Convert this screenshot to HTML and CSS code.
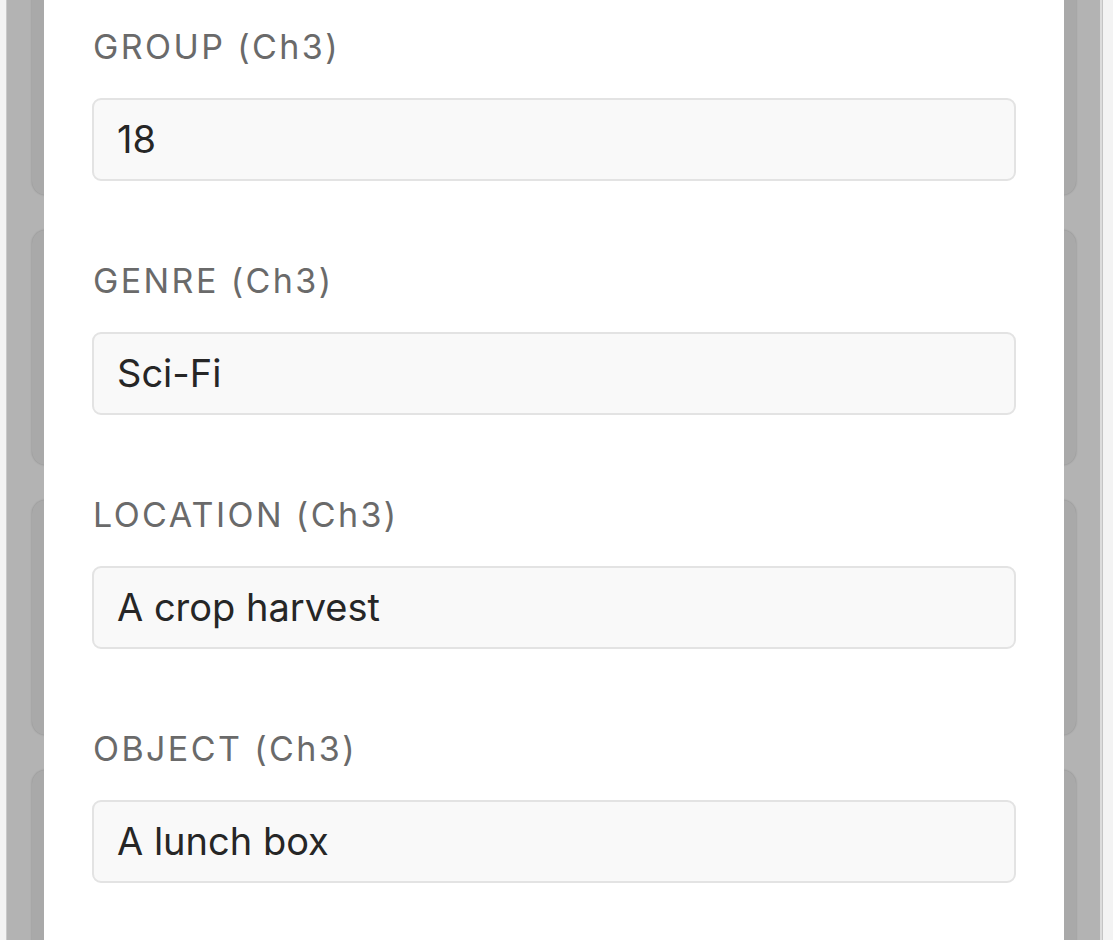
FILE: index.html
```html
<!DOCTYPE html>
<html lang="en">
<head>
<meta charset="utf-8">
<title>Fields</title>
<link rel="stylesheet" href="styles.css">
</head>
<body>
  <div class="edge-left"></div>
  <div class="edge-left-line"></div>
  <div class="backdrop">
    <div class="cards">
      <div class="card"></div>
      <div class="card"></div>
      <div class="card"></div>
      <div class="card"></div>
    </div>
    <div class="sheet">
      <div class="field">
        <div class="label">GROUP (Ch3)</div>
        <div class="input">18</div>
      </div>
      <div class="field">
        <div class="label">GENRE (Ch3)</div>
        <div class="input">Sci-Fi</div>
      </div>
      <div class="field">
        <div class="label">LOCATION (Ch3)</div>
        <div class="input">A crop harvest</div>
      </div>
      <div class="field">
        <div class="label">OBJECT (Ch3)</div>
        <div class="input">A lunch box</div>
      </div>
    </div>
  </div>
  <div class="edge-right-line"></div>
  <div class="edge-right-dark"></div>
  <div class="edge-right"></div>
</body>
</html>
```

FILE: styles.css
```css
html, body {
  margin: 0;
  padding: 0;
  height: 940px;
  overflow: hidden;
}
body {
  display: flex;
  width: 1113px;
  font-family: Inter, "Noto Sans", "Liberation Sans", sans-serif;
  background: #f3f3f3;
}
.edge-left {
  width: 6px;
  background: #f3f3f3;
}
.edge-left-line {
  width: 1px;
  background: #c9c9c9;
}
.backdrop {
  position: relative;
  width: 1093px;
  background: #b3b3b3;
  overflow: hidden;
}
.cards {
  display: flex;
  flex-direction: column;
  gap: 35px;
  margin-top: -40px;
  padding: 0 24px 0 25px;
}
.card {
  height: 235px;
  flex: none;
  background: #a9a9a9;
  border-radius: 14px;
  box-shadow: 0 0 2px rgba(0, 0, 0, 0.25);
}
.sheet {
  position: absolute;
  top: 0;
  bottom: 0;
  left: 37px;
  width: 1020px;
  background: #ffffff;
  box-sizing: border-box;
  padding: 24px 48px 0 48px;
}
.field {
  height: 234px;
}
.label {
  font-size: 34px;
  line-height: 46px;
  color: #6a6a6a;
  padding-left: 1px;
  letter-spacing: 2.4px;
}
.input {
  margin-top: 28px;
  box-sizing: border-box;
  width: 924px;
  height: 83px;
  border: 2px solid #e3e3e3;
  border-radius: 9px;
  background: #f9f9f9;
  padding: 0 0 0 23px;
  font-size: 38px;
  line-height: 79px;
  color: #262626;
}
.edge-right-line {
  width: 2px;
  background: #dcdcdc;
}
.edge-right-dark {
  width: 1px;
  background: #c4c4c4;
}
.edge-right {
  flex: 1;
  background: #f3f3f3;
}
```
